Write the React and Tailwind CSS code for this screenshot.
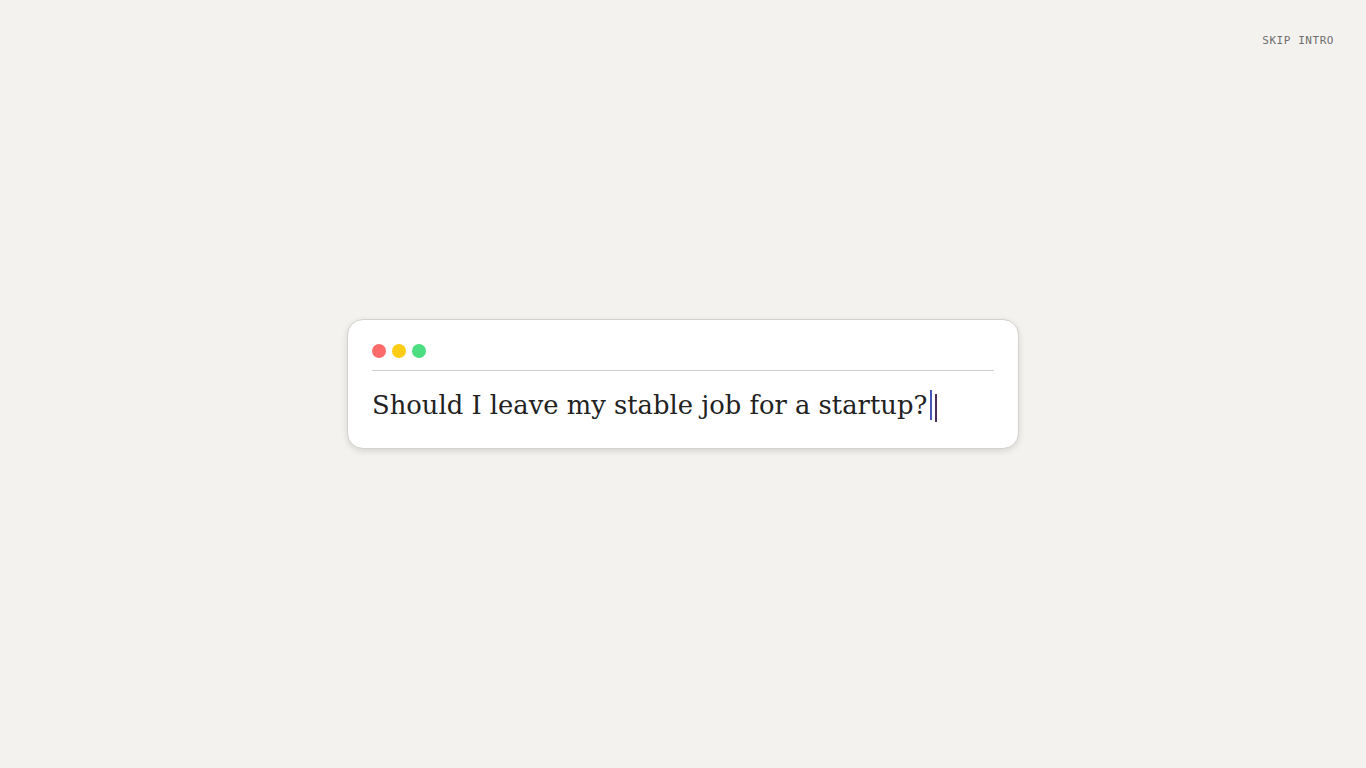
import React from "react";

function App() {
    return (
        <div className="w-full min-h-screen bg-[#f4f2ef] flex flex-col">
            <div className="flex justify-end px-8 pt-[33px]">
                <button className="font-['DejaVu_Sans_Mono',monospace] text-[11px] tracking-[0.05em] text-[#6e6e6e] uppercase">
                    Skip Intro
                </button>
            </div>

            <div className="flex justify-center pt-[269px]">
                <div className="w-[672px] h-[130px] bg-white border border-[#d4d2cf] rounded-2xl shadow-[0_2px_6px_rgba(0,0,0,0.12)] px-6 pt-[24px]">
                    <div className="flex gap-[6px] pb-[12px] border-b border-[#cfcfcf]">
                        <span className="w-[14px] h-[14px] rounded-full bg-[#ff6b6b]" />
                        <span className="w-[14px] h-[14px] rounded-full bg-[#facc15]" />
                        <span className="w-[14px] h-[14px] rounded-full bg-[#4ade80]" />
                    </div>
                    <div className="flex items-center pt-[17px] font-['DejaVu_Serif',serif] text-[25.8px] leading-[34px] text-[#222222]">
                        <span>Should I leave my stable job for a startup?</span>
                        <span className="ml-[3px] w-[2px] h-[30px] bg-[#4556b8]" />
                        <span className="ml-[3px] mt-[6px] w-[2px] h-[28px] bg-[#4a2d5e]" />
                    </div>
                </div>
            </div>
        </div>
    );
}

export default App;
